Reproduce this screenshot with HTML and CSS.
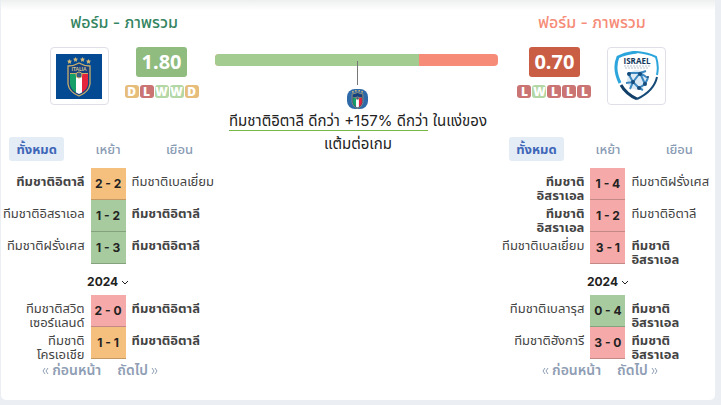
FILE: index.html
```html
<!DOCTYPE html>
<html lang="th">
<head>
    <meta charset="UTF-8">
    <meta name="viewport" content="width=device-width, initial-scale=1.0">
    <title>ฟอร์ม - ภาพรวม</title>
    <link rel="stylesheet" href="styles.css">
</head>
<body>
    <svg class="symbols" aria-hidden="true">
        <symbol id="star" viewBox="0 0 10 10">
            <path d="M5 0l1.500 3.200 3.500.5-2.500 2.400.6 3.600L5 8 1.900 9.700l.6-3.600L0 3.700l3.500-.5z" fill="#d3b878"/>
        </symbol>
        <symbol id="italy-shield" viewBox="0 0 24 41">
            <use href="#star" x="0" y="3" width="5" height="5"/>
            <use href="#star" x="6" y="1" width="5" height="5"/>
            <use href="#star" x="13" y="1" width="5" height="5"/>
            <use href="#star" x="19" y="3" width="5" height="5"/>
            <path d="M1 10Q7 10 12 7Q17 10 23 10V28Q22 36 12 40Q2 36 1 28z" fill="#15427f" stroke="#c9ad6b" stroke-width="1.300"/>
            <path d="M3 18H9V36.500Q3.500 33 3 28z" fill="#14a068"/>
            <path d="M9 18H15V36.500L12 38 9 36.500z" fill="#fff"/>
            <path d="M15 18H21V28Q20.500 33 15 36.500z" fill="#e5233b"/>
            <path d="M3 17.500H21" stroke="#c9ad6b"/>
            <circle cx="12" cy="19" r="3" fill="#375b87" stroke="#c9ad6b"/>
        </symbol>
    </svg>

    <main class="card">
        <section class="overview">
            <div class="team team-home">
                <h2>ฟอร์ม - ภาพรวม</h2>
                <div class="team-summary">
                    <a class="crest" href="#" aria-label="ทีมชาติอิตาลี">
                        <svg width="46" height="45" viewBox="0 0 46 45">
                            <rect width="46" height="45" fill="#034a93"/>
                            <use href="#italy-shield" x="11" y="2" width="24" height="41"/>
                            <text x="23" y="17" text-anchor="middle" class="crest-italia">ITALIA</text>
                        </svg>
                    </a>
                    <div class="rating">
                        <strong class="points points-good">1.80</strong>
                        <div class="form">
                            <span class="d">D</span><span class="l">L</span><span class="w">W</span><span class="w">W</span><span class="d">D</span>
                        </div>
                    </div>
                </div>
            </div>

            <div class="compare">
                <div class="bar"><div class="bar-home"></div></div>
                <div class="pointer"></div>
                <svg class="mini-crest" width="21" height="20" viewBox="0 0 21 20">
                    <rect width="21" height="20" rx="8" fill="#2e6aa9"/>
                    <use href="#italy-shield" x="4" y="0" width="13" height="20"/>
                </svg>
                <p><span>ทีมชาติอิตาลี ดีกว่า +157% ดีกว่า</span> ในแง่ของ<br>แต้มต่อเกม</p>
            </div>

            <div class="team team-away">
                <h2>ฟอร์ม - ภาพรวม</h2>
                <div class="team-summary">
                    <div class="rating">
                        <strong class="points points-bad">0.70</strong>
                        <div class="form">
                            <span class="l">L</span><span class="w">W</span><span class="l">L</span><span class="l">L</span><span class="l">L</span>
                        </div>
                    </div>
                    <a class="crest" href="#" aria-label="ทีมชาติอิสราเอล">
                        <svg width="46" height="50" viewBox="0 0 46 50">
                            <path d="M23 1Q34 2 42 6Q45 15 43 24" fill="none" stroke="#2ba5dc" stroke-width="2"/>
                            <path d="M23 1Q12 2 4 6Q-1 18 6 32" fill="none" stroke="#2ba5dc" stroke-width="3"/>
                            <path d="M43 26Q40 40 23 48" fill="none" stroke="#164b78" stroke-width="2"/>
                            <path d="M7 34Q12 43 23 48" fill="none" stroke="#123f68" stroke-width="3"/>
                            <text x="23" y="13" text-anchor="middle" class="crest-israel">ISRAEL</text>
                            <path d="M10 15H36M11 17H35" stroke="#9aabb9" stroke-dasharray="2 1" stroke-width=".7"/>
                            <circle cx="23" cy="29" r="10" fill="#dceaf5"/>
                            <path d="M12 32L19 31 25 37 31 33 34 27M14 22L19 31 16 38M14 22L26 22 31 33M26 22L32 20M25 37L29 39M19 31L26 22 34 27" fill="none" stroke="#3b87bf" stroke-width="2"/>
                            <g fill="#174d7c">
                                <circle cx="15" cy="23" r="2"/><circle cx="26" cy="23" r="2"/><circle cx="19" cy="31" r="2"/>
                                <circle cx="31" cy="33" r="2"/><circle cx="25" cy="37" r="2"/><circle cx="34" cy="26" r="1"/>
                            </g>
                        </svg>
                    </a>
                </div>
            </div>
        </section>

        <section class="details">
            <div class="history">
                <nav class="tabs">
                    <button class="active">ทั้งหมด</button>
                    <button>เหย้า</button>
                    <button>เยือน</button>
                </nav>
                <table>
                    <tr><td class="home own"><div>ทีมชาติอิตาลี</div></td><td class="score draw">2 - 2</td><td class="away"><div>ทีมชาติเบลเยี่ยม</div></td></tr>
                    <tr><td class="home"><div>ทีมชาติอิสราเอล</div></td><td class="score win">1 - 2</td><td class="away own"><div>ทีมชาติอิตาลี</div></td></tr>
                    <tr><td class="home"><div>ทีมชาติฝรั่งเศส</div></td><td class="score win">1 - 3</td><td class="away own"><div>ทีมชาติอิตาลี</div></td></tr>
                </table>
                <button class="season">2024 <svg width="8" height="6" viewBox="0 0 8 6"><path d="M1 1l3 3 3-3"/></svg></button>
                <table>
                    <tr><td class="home"><div>ทีมชาติสวิต<br>เซอร์แลนด์</div></td><td class="score loss">2 - 0</td><td class="away own"><div>ทีมชาติอิตาลี</div></td></tr>
                    <tr><td class="home"><div>ทีมชาติ<br>โครเอเชีย</div></td><td class="score draw">1 - 1</td><td class="away own"><div>ทีมชาติอิตาลี</div></td></tr>
                </table>
                <nav class="pager">
                    <a href="#"><svg width="7" height="8" viewBox="0 0 7 8"><path d="M3 1L1 4l2 3M6 1L4 4l2 3"/></svg> ก่อนหน้า</a>
                    <a href="#">ถัดไป <svg width="7" height="8" viewBox="0 0 7 8"><path d="M1 1l2 3-2 3M4 1l2 3-2 3"/></svg></a>
                </nav>
            </div>

            <div class="history">
                <nav class="tabs">
                    <button class="active">ทั้งหมด</button>
                    <button>เหย้า</button>
                    <button>เยือน</button>
                </nav>
                <table>
                    <tr><td class="home own"><div>ทีมชาติ<br>อิสราเอล</div></td><td class="score loss">1 - 4</td><td class="away"><div>ทีมชาติฝรั่งเศส</div></td></tr>
                    <tr><td class="home own"><div>ทีมชาติ<br>อิสราเอล</div></td><td class="score loss">1 - 2</td><td class="away"><div>ทีมชาติอิตาลี</div></td></tr>
                    <tr><td class="home"><div>ทีมชาติเบลเยี่ยม</div></td><td class="score loss">3 - 1</td><td class="away own"><div>ทีมชาติ<br>อิสราเอล</div></td></tr>
                </table>
                <button class="season">2024 <svg width="8" height="6" viewBox="0 0 8 6"><path d="M1 1l3 3 3-3"/></svg></button>
                <table>
                    <tr><td class="home"><div>ทีมชาติเบลารุส</div></td><td class="score win">0 - 4</td><td class="away own"><div>ทีมชาติ<br>อิสราเอล</div></td></tr>
                    <tr><td class="home"><div>ทีมชาติฮังการี</div></td><td class="score loss">3 - 0</td><td class="away own"><div>ทีมชาติ<br>อิสราเอล</div></td></tr>
                </table>
                <nav class="pager">
                    <a href="#"><svg width="7" height="8" viewBox="0 0 7 8"><path d="M3 1L1 4l2 3M6 1L4 4l2 3"/></svg> ก่อนหน้า</a>
                    <a href="#">ถัดไป <svg width="7" height="8" viewBox="0 0 7 8"><path d="M1 1l2 3-2 3M4 1l2 3-2 3"/></svg></a>
                </nav>
            </div>
        </section>
    </main>
</body>
</html>
```
FILE: styles.css
```css
* {
    margin: 0;
    padding: 0;
    box-sizing: border-box;
}

body {
    background: #ebeff3;
    font-family: Inter, "Noto Sans Thai", Tahoma, sans-serif;
    color: #222;
    padding: 0 6px 5px 1px;
}

button {
    border: none;
    background: none;
    color: inherit;
    font: inherit;
    cursor: pointer;
}

a {
    color: inherit;
    text-decoration: none;
}

.symbols {
    position: absolute;
    width: 0;
    height: 0;
}

.card {
    background: linear-gradient(#eef0f0, #fff 10px);
    border-radius: 0 0 5px 5px;
    padding: 12px 0 19px;
}

.overview {
    display: grid;
    grid-template-columns: 3fr 4fr 3fr;
    height: 125px;
}

.team-home {
    padding-left: 32px;
    color: #348562;
}

.team-away {
    padding-right: 32px;
    color: #f68c78;
}

h2 {
    font-size: 16px;
    font-weight: 500;
    line-height: 20px;
    text-align: center;
}

.team-summary {
    display: flex;
    justify-content: center;
    gap: 16px;
    margin-top: 15px;
}

.crest {
    display: flex;
    align-items: center;
    justify-content: center;
    width: 59px;
    height: 58px;
    border: 1px solid #dfdfe8;
    border-radius: 4px;
}

.crest-italia {
    font: bold 5px Lato, sans-serif;
    fill: #d9c58d;
}

.crest-israel {
    font: bold 8px "Open Sans", sans-serif;
    fill: #12375c;
}

.points {
    display: block;
    width: 51px;
    margin: 0 auto;
    border-radius: 3px;
    color: #fff;
    font: bold 20px/30px "Noto Sans", sans-serif;
    text-align: center;
}

.points-good {
    background: #90bc80;
}

.points-bad {
    background: #c95e45;
}

.form {
    display: flex;
    gap: 1px;
    margin-top: 8px;
}

.form span {
    width: 14px;
    border-radius: 3px;
    color: #fff;
    font: 900 12px/13px "Noto Sans", sans-serif;
    text-align: center;
}

.d {
    background: #e7bd7c;
}

.l {
    background: #ca7474;
}

.w {
    background: #b4d7a6;
}

.compare {
    padding-top: 42px;
    display: flex;
    flex-direction: column;
    align-items: center;
}

.bar {
    align-self: stretch;
    height: 12px;
    margin-right: 3px;
    border-radius: 4px;
    background: #f68c78;
    overflow: hidden;
    flex-shrink: 0;
}

.bar-home {
    width: 72%;
    height: 100%;
    background: #a3cd90;
}

.pointer {
    width: 1px;
    height: 24px;
    margin: -5px 0 4px;
    background: #777;
    z-index: 1;
    flex-shrink: 0;
}

.mini-crest {
    flex-shrink: 0;
}

.compare p {
    font-size: 15px;
    line-height: 23px;
    text-align: center;
    white-space: nowrap;
}

.compare p span {
    border-bottom: 1px solid #76b843;
}

.details {
    display: flex;
    justify-content: space-between;
}

.history {
    width: 30%;
    text-align: center;
}

.tabs {
    display: grid;
    grid-template-columns: 1fr 1fr 1fr;
    justify-items: center;
    margin-bottom: 7px;
}

.tabs button {
    padding: 0 7px;
    border-radius: 3px;
    color: #8a9bb4;
    font-size: 13px;
    font-weight: 500;
    line-height: 24px;
}

.tabs .active {
    background: #e4ecf6;
    color: #3f67b8;
    font-weight: bold;
}

table {
    width: 100%;
    border-collapse: separate;
    border-spacing: 0;
    table-layout: fixed;
}

.home, .away {
    color: #444;
    font-size: 13px;
    line-height: 14px;
    vertical-align: top;
    white-space: nowrap;
}

.home div, .away div {
    height: 32px;
    padding-top: 6px;
}

.home {
    padding-right: 6px;
    text-align: right;
}

.away {
    padding-left: 6px;
    text-align: left;
}

.own {
    font-weight: bold;
}

.score {
    width: 35px;
    border-bottom: 1px solid rgba(0,0,0,0.2);
    font-size: 12px;
    font-weight: bold;
    line-height: 16px;
}

.draw {
    background: #f5c07e;
}

.win {
    background: #a7cb9f;
}

.loss {
    background: #f5aaa9;
}

.season {
    display: block;
    margin: 0 auto;
    padding-top: 4px;
    font-size: 12px;
    font-weight: bold;
    line-height: 27px;
}

.season svg, .pager svg {
    fill: none;
    stroke: currentColor;
}

.pager {
    display: flex;
    justify-content: center;
    gap: 16px;
    padding-right: 16px;
    color: #8f9eb4;
    font-size: 14px;
    font-weight: 600;
    line-height: 22px;
    white-space: nowrap;
}
```
